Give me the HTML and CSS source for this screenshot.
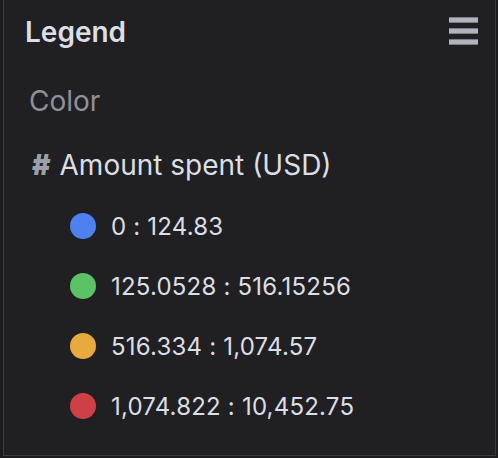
FILE: index.html
```html
<!DOCTYPE html>
<html lang="en">

<head>
    <meta charset="UTF-8" />
    <title>Legend</title>
    <link rel="stylesheet" href="styles.css">
</head>

<body>
    <div class="legend-panel">
        <div class="legend-header">
            <h2>Legend</h2>
            <button class="menu-btn" aria-label="Menu">
                <span></span><span></span><span></span>
            </button>
        </div>

        <div class="legend-section">Color</div>

        <div class="legend-field">
            <span class="field-icon">#</span>
            <span>Amount spent (USD)</span>
        </div>

        <ul class="legend-items">
            <li><span class="dot dot-blue"></span>0 : 124.83</li>
            <li><span class="dot dot-green"></span>125.0528 : 516.15256</li>
            <li><span class="dot dot-orange"></span>516.334 : 1,074.57</li>
            <li><span class="dot dot-red"></span>1,074.822 : 10,452.75</li>
        </ul>
    </div>
</body>

</html>
```

FILE: styles.css
```css
body {
    margin: 0;
    background-color: #1c1c1e;
    font-family: Inter, "Noto Sans", sans-serif;
}

.legend-panel {
    box-sizing: border-box;
    margin-left: 3px;
    width: 493px;
    height: 456px;
    background-color: #202022;
    border: 1px solid #3a3a40;
    border-top: none;
    padding: 0 17px 0 21px;
}

.legend-header {
    display: flex;
    justify-content: space-between;
    align-items: center;
    height: 64px;
}

.legend-header h2 {
    margin: 0;
    font-size: 28px;
    font-weight: 600;
    color: #dcdee6;
}

.menu-btn {
    display: flex;
    flex-direction: column;
    gap: 5px;
    padding: 0;
    background: none;
    border: none;
    margin-top: -2px;
}

.menu-btn span {
    display: block;
    width: 29px;
    height: 6px;
    background-color: #b1b3be;
    border-top: 1px solid #7c7e87;
    border-bottom: 1px solid #7c7e87;
    box-sizing: border-box;
}

.legend-section {
    margin-top: 22px;
    margin-left: 4px;
    font-size: 28px;
    color: #8e9099;
    line-height: 30px;
}

.legend-field {
    display: flex;
    align-items: center;
    gap: 9px;
    margin-top: 34px;
    margin-left: 7px;
    font-size: 28px;
    color: #dcdee6;
    line-height: 30px;
}

.field-icon {
    font-weight: 900;
    color: #9c9ea8;
    font-size: 28px;
}

.legend-items {
    list-style: none;
    margin: 16px 0 0 45px;
    padding: 0;
}

.legend-items li {
    display: flex;
    align-items: center;
    gap: 15px;
    height: 60px;
    font-size: 24px;
    letter-spacing: 0.2px;
    color: #dcdee6;
}

.dot {
    width: 26px;
    height: 26px;
    border-radius: 50%;
}

.dot-blue {
    background-color: #4f80f0;
}

.dot-green {
    background-color: #5cc266;
}

.dot-orange {
    background-color: #e8a93f;
}

.dot-red {
    background-color: #cf4046;
}
```
